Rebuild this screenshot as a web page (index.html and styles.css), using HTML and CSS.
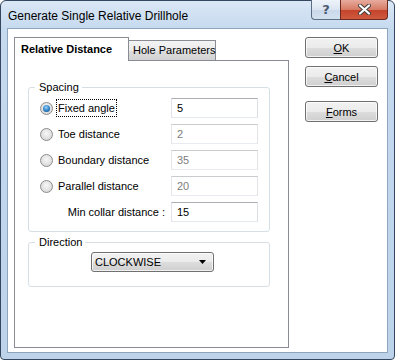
FILE: index.html
```html
<!DOCTYPE html>
<html lang="en">
<head>
  <meta charset="UTF-8">
  <title>Generate Single Relative Drillhole</title>
  <link rel="stylesheet" href="styles.css">
</head>
<body>
  <div class="window">
    <div class="titlebar">
      <span class="title">Generate Single Relative Drillhole</span>
      <div class="caption-btns">
        <span class="cap-btn help">?</span>
        <span class="cap-btn close">
          <svg width="13" height="11" viewBox="0 0 13 11">
            <path d="M2 1.5 L11 9.5 M11 1.5 L2 9.5" stroke="#3c3c3c" stroke-width="4" stroke-linecap="round"/>
            <path d="M2 1.5 L11 9.5 M11 1.5 L2 9.5" stroke="#fff" stroke-width="2.2" stroke-linecap="round"/>
          </svg>
        </span>
      </div>
    </div>

    <div class="client">
      <div class="tabs">
        <div class="tab-strip">
          <div class="tab active">Relative Distance</div>
          <div class="tab">Hole Parameters</div>
        </div>
        <div class="tab-panel">
          <fieldset class="group spacing">
            <legend>Spacing</legend>
            <div class="group-body">
              <div class="row">
                <div class="choice"><span class="radio checked"></span><span class="label focus">Fixed angle</span></div>
                <div class="field">5</div>
              </div>
              <div class="row">
                <div class="choice"><span class="radio"></span><span class="label">Toe distance</span></div>
                <div class="field disabled">2</div>
              </div>
              <div class="row">
                <div class="choice"><span class="radio"></span><span class="label">Boundary distance</span></div>
                <div class="field disabled">35</div>
              </div>
              <div class="row">
                <div class="choice"><span class="radio"></span><span class="label">Parallel distance</span></div>
                <div class="field disabled">20</div>
              </div>
              <div class="row">
                <div class="choice right"><span class="label">Min collar distance :</span></div>
                <div class="field">15</div>
              </div>
            </div>
          </fieldset>

          <fieldset class="group direction">
            <legend>Direction</legend>
            <div class="group-body">
              <div class="combo">
                <span>CLOCKWISE</span>
                <svg width="7" height="4" viewBox="0 0 7 4"><path d="M0 0 H7 L3.5 4 Z" fill="#000"/></svg>
              </div>
            </div>
          </fieldset>
        </div>
      </div>

      <div class="buttons">
        <button class="btn"><u>O</u>K</button>
        <button class="btn"><u>C</u>ancel</button>
        <button class="btn forms"><u>F</u>orms</button>
      </div>
    </div>
  </div>
</body>
</html>
```

FILE: styles.css
```css
* {
  margin: 0;
  padding: 0;
  box-sizing: border-box;
}

body {
  font-family: 'Liberation Sans', Arial, sans-serif;
  font-size: 11px;
  color: #000;
  background: #fff;
}

.window {
  width: 395px;
  height: 360px;
  border: 1px solid #34475e;
  border-radius: 6px 6px 4px 4px;
  background: linear-gradient(#dae7f5, #c6daef 28px, #bcd3ea);
  padding: 0 6px 6px 6px;
  display: flex;
  flex-direction: column;
}

/* title bar */
.titlebar {
  height: 27px;
  display: flex;
  justify-content: space-between;
  align-items: flex-start;
}

.title {
  font-size: 12px;
  line-height: 14px;
  margin: 8px 0 0 1px;
}

.caption-btns {
  display: flex;
  margin-top: -1px;
}

.cap-btn {
  height: 20px;
  display: flex;
  align-items: center;
  justify-content: center;
  border: 1px solid #5b6d85;
  border-top: none;
}

.help {
  width: 29px;
  border-radius: 0 0 0 4px;
  border-right: none;
  background: linear-gradient(#eef3f9, #dbe5f1 50%, #c9d8ea 51%, #d3e0ef);
  color: #4a5a70;
  font-family: 'DejaVu Sans', sans-serif;
  font-weight: bold;
  font-size: 13px;
}

.close {
  width: 48px;
  border-radius: 0 0 4px 0;
  border-color: #6e2a20;
  background: linear-gradient(#e7ab9d, #d77b66 50%, #c4432a 51%, #cf5a3e);
}

/* client area */
.client {
  flex: 1;
  background: #fff;
  border: 1px solid #8fa5bd;
  display: flex;
  padding: 8px 0 4px 6px;
}

.tabs {
  display: flex;
  flex-direction: column;
  width: 275px;
}

.tab-strip {
  display: flex;
  align-items: flex-end;
  height: 23px;
  position: relative;
  z-index: 1;
}

.tab {
  border: 1px solid #898c95;
  border-bottom: none;
  height: 20px;
  line-height: 18px;
  white-space: nowrap;
  background: linear-gradient(#f3f3f3, #ebebeb 50%, #dddddd 51%, #d3d3d3);
}

.tab.active {
  width: 115px;
  height: 24px;
  margin-bottom: -1px;
  background: #fff;
  font-weight: bold;
  padding: 3px 0 0 6px;
  line-height: 16px;
}

.tab + .tab {
  margin-left: -1px;
  width: 88px;
  padding-left: 4px;
}

.tab-panel {
  flex: 1;
  border: 1px solid #898c95;
  padding: 0 18px 0 13px;
}

/* group boxes */
.group {
  border: 1px solid #d5dfe5;
  border-radius: 3px;
}

.group legend {
  margin-left: 6px;
  padding: 0 3px 0 4px;
  line-height: 14px;
}

.spacing {
  margin-top: 19px;
}

.spacing .group-body {
  padding: 4px 9px 9px 11px;
  display: flex;
  flex-direction: column;
  gap: 6px;
}

.row {
  display: flex;
  align-items: center;
  height: 20px;
}

.choice {
  width: 131px;
  display: flex;
  align-items: center;
}

.choice.right {
  justify-content: flex-end;
  padding-right: 5px;
}

.radio {
  width: 13px;
  height: 13px;
  border-radius: 50%;
  border: 1px solid #8b8b8b;
  background: radial-gradient(circle at 50% 40%, #f7f7f7, #dcdcdc 70%, #cfcfcf);
  margin-right: 4px;
  display: flex;
  align-items: center;
  justify-content: center;
}

.radio.checked::after {
  content: '';
  width: 7px;
  height: 7px;
  border-radius: 50%;
  background: radial-gradient(circle at 45% 35%, #9ad3f7, #2b7fc6 55%, #103e78);
}

.label {
  padding: 1px 1px;
  line-height: 14px;
}

.label.focus {
  outline: 1px dotted #000;
}

.field {
  width: 87px;
  height: 20px;
  border: 1px solid #abadb3;
  border-color: #abadb3 #dbdfe6 #e3e9ef #e2e3ea;
  padding: 0 0 0 5px;
  line-height: 18px;
}

.field.disabled {
  border-color: #c9cbcf #e1e3e6 #e7eaee #e5e6ea;
  color: #7d7d7d;
}

.direction {
  margin-top: 3px;
}

.direction .group-body {
  padding: 3px 0 14px 62px;
}

.combo {
  width: 123px;
  height: 20px;
  border: 1px solid #707070;
  border-radius: 3px;
  background: linear-gradient(#f2f2f2, #ebebeb 50%, #dddddd 51%, #cfcfcf);
  box-shadow: inset 0 0 0 1px rgba(255, 255, 255, 0.7);
  display: flex;
  align-items: center;
  justify-content: space-between;
  padding: 0 7px 0 3px;
}

/* dialog buttons */
.buttons {
  display: flex;
  flex-direction: column;
  margin-left: 16px;
}

.btn {
  width: 73px;
  height: 21px;
  border: 1px solid #707070;
  border-radius: 3px;
  background: linear-gradient(#f2f2f2, #ebebeb 50%, #dddddd 51%, #cfcfcf);
  box-shadow: inset 0 0 0 1px rgba(255, 255, 255, 0.7);
  font: inherit;
  color: #000;
  margin-bottom: 8px;
}

.btn.forms {
  margin-top: 6px;
}
```
